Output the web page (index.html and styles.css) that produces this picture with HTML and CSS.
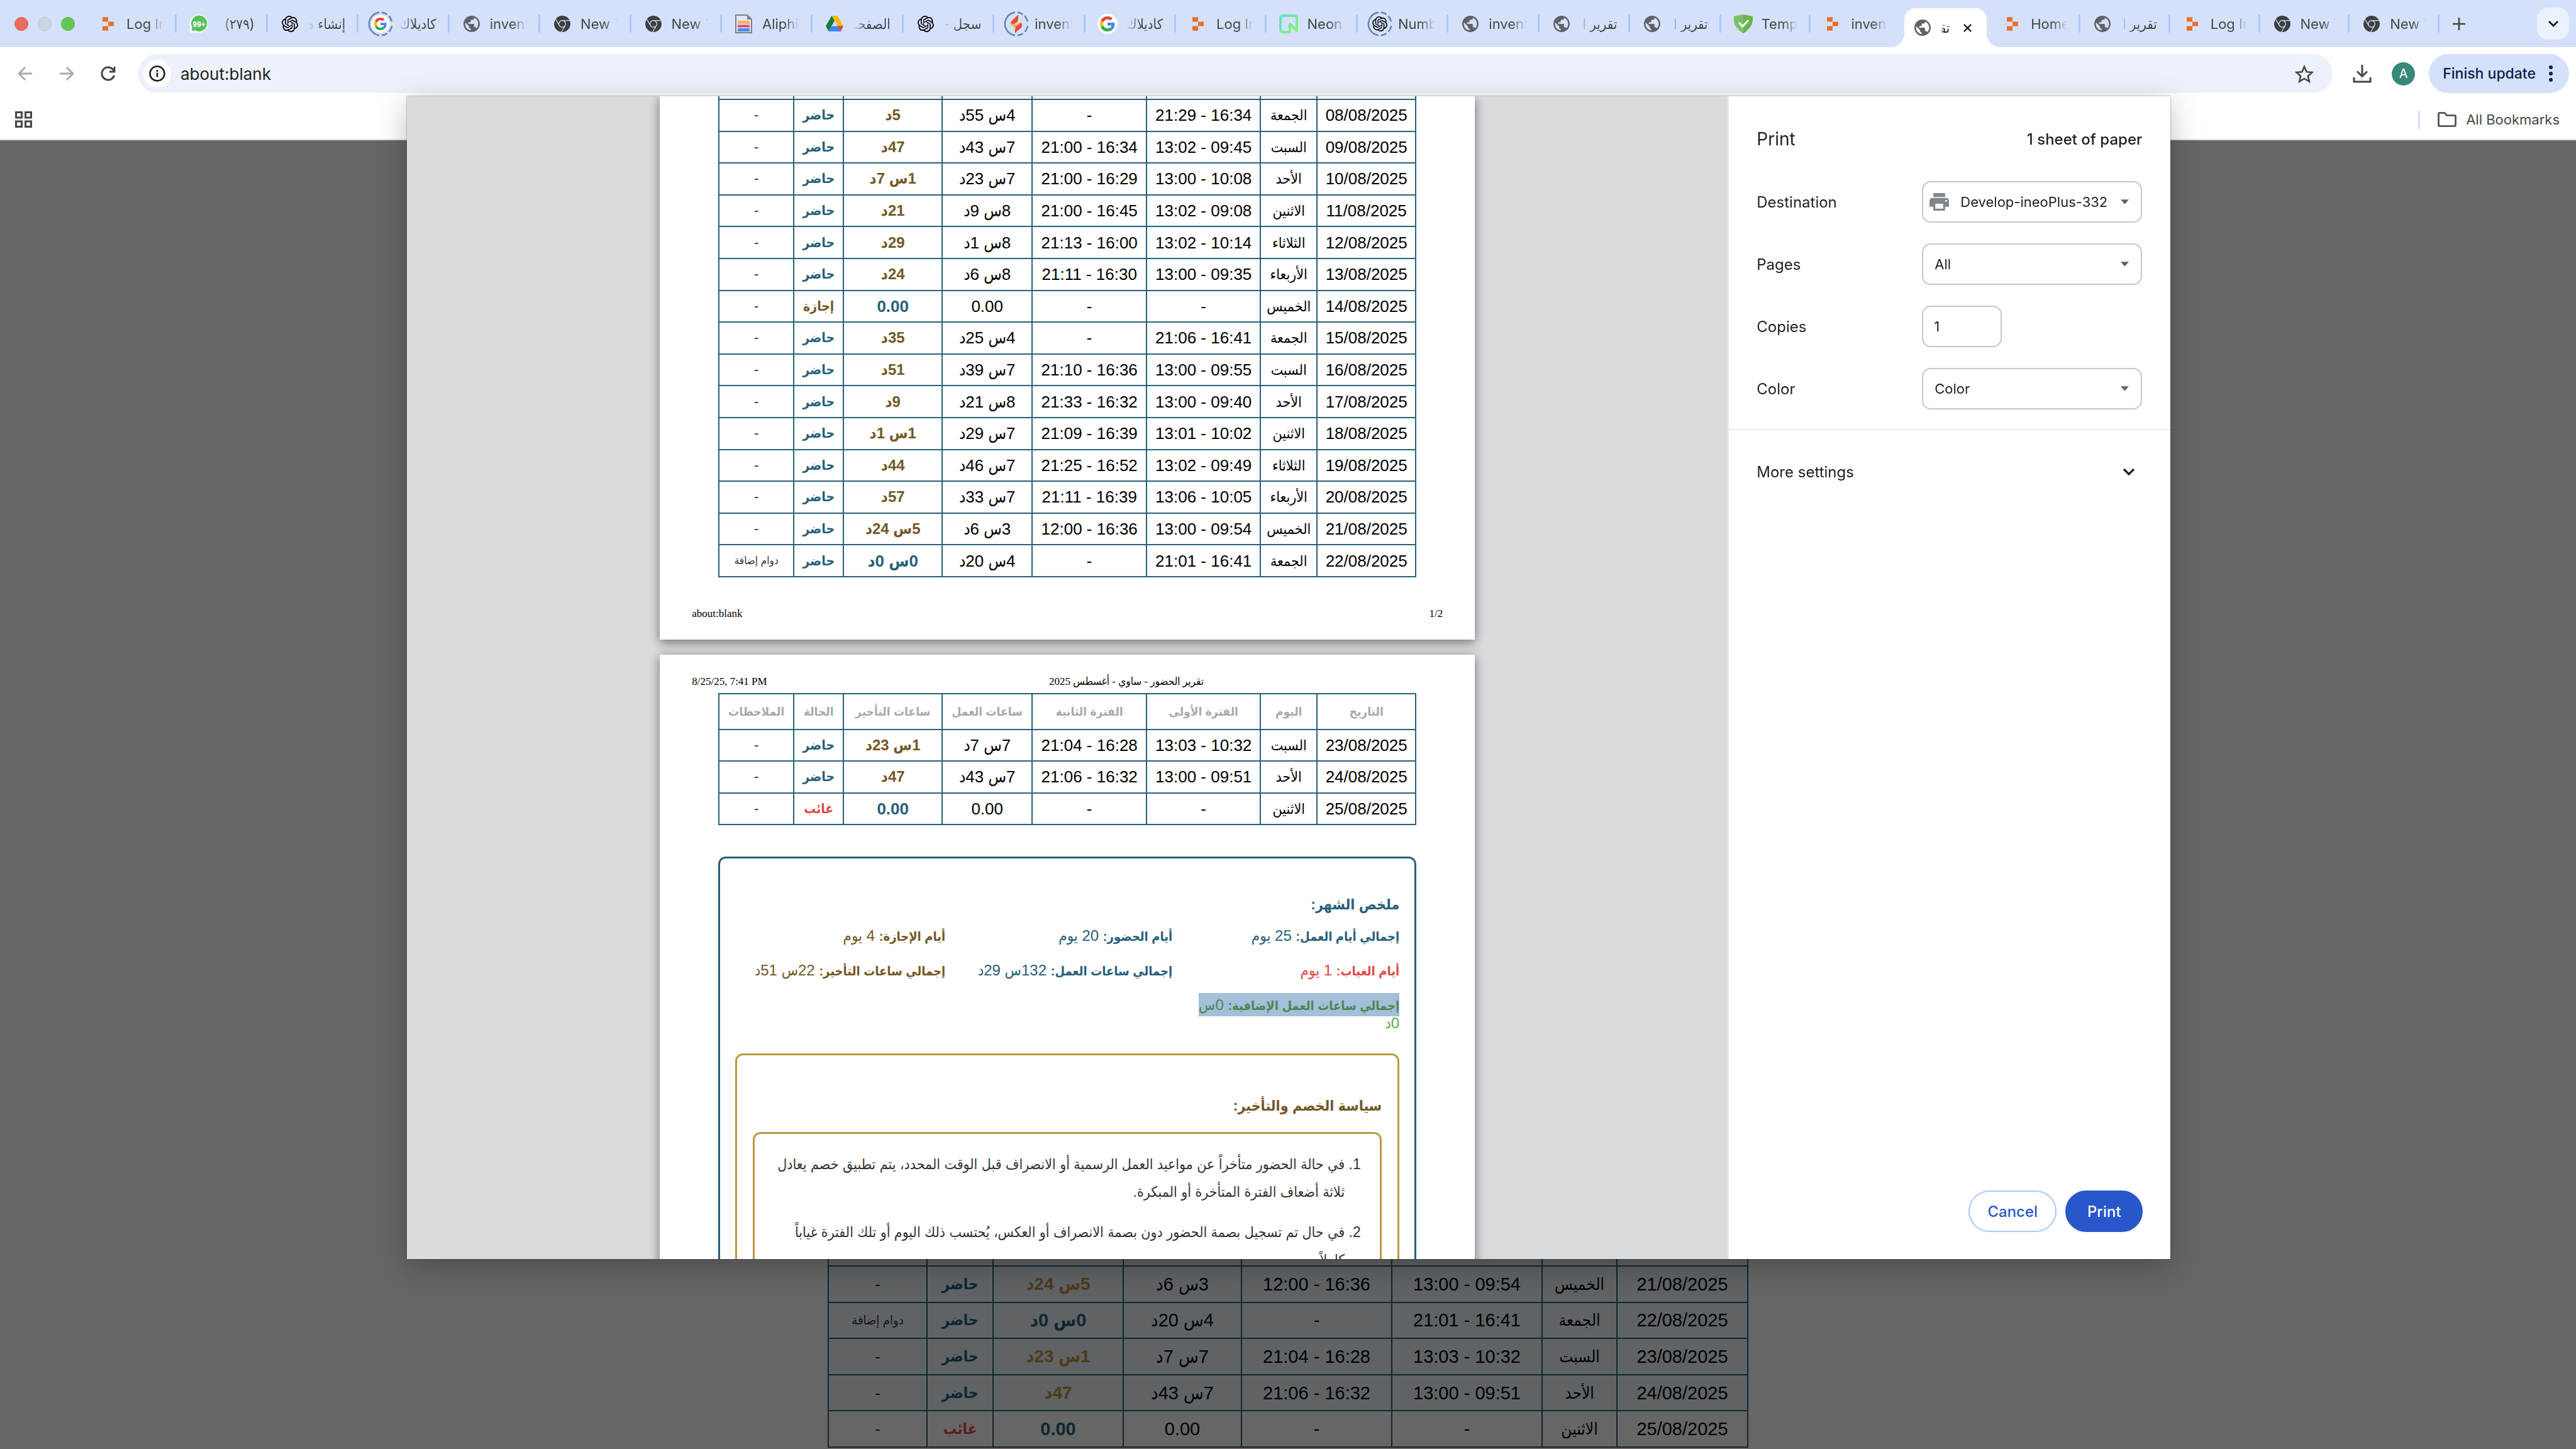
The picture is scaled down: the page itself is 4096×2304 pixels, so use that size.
FILE: index.html
```html
<!DOCTYPE html>
<html lang="en">
<head>
<meta charset="utf-8">
<title>about:blank</title>
<link rel="stylesheet" href="styles.css">
</head>
<body>
<svg class="defs" aria-hidden="true">
  <symbol id="i-rail" viewBox="0 0 20 24"><path fill="#e8702e" d="M0 0h10v8H0zM10 8h10v8H10zM0 16h10v8H0z"/></symbol>
  <symbol id="i-globe" viewBox="2 2 20 20"><path fill="#5f6368" d="M12 2C6.48 2 2 6.48 2 12s4.48 10 10 10 10-4.48 10-10S17.52 2 12 2zm-1 17.93c-3.95-.49-7-3.85-7-7.93 0-.62.08-1.21.21-1.79L9 15v1c0 1.1.9 2 2 2v1.93zm6.9-2.54c-.26-.81-1-1.39-1.9-1.39h-1v-3c0-.55-.45-1-1-1H8v-2h2c.55 0 1-.45 1-1V7h2c1.1 0 2-.9 2-2v-.41c2.93 1.19 5 4.06 5 7.41 0 2.08-.8 3.97-2.1 5.39z"/></symbol>
  <symbol id="i-chrome" viewBox="0 0 24 24"><path fill="#3c4043" d="M12 0C8.21 0 4.831 1.757 2.632 4.501l3.953 6.848A5.454 5.454 0 0 1 12 6.545h10.691A12 12 0 0 0 12 0zM1.931 5.47A11.943 11.943 0 0 0 0 12c0 6.012 4.42 10.991 10.189 11.864l3.953-6.847a5.45 5.45 0 0 1-6.865-2.29zm13.342 2.166a5.446 5.446 0 0 1 1.45 7.09l.002.001h-.002l-5.344 9.257c.206.01.413.016.621.016 6.627 0 12-5.373 12-12 0-1.54-.29-3.011-.818-4.364zM12 16.364a4.364 4.364 0 1 1 0-8.728 4.364 4.364 0 0 1 0 8.728Z"/></symbol>
  <symbol id="i-knot" viewBox="0 0 24 24"><path fill="#000" d="M22.2819 9.8211a5.9847 5.9847 0 0 0-.5157-4.9108 6.0462 6.0462 0 0 0-6.5098-2.9A6.0651 6.0651 0 0 0 4.9807 4.1818a5.9847 5.9847 0 0 0-3.9977 2.9 6.0462 6.0462 0 0 0 .7427 7.0966 5.98 5.98 0 0 0 .511 4.9107 6.051 6.051 0 0 0 6.5146 2.9001A5.9847 5.9847 0 0 0 13.2599 24a6.0557 6.0557 0 0 0 5.7718-4.2058 5.9894 5.9894 0 0 0 3.9977-2.9001 6.0557 6.0557 0 0 0-.7475-7.0729zm-9.022 12.6081a4.4755 4.4755 0 0 1-2.8764-1.0408l.1419-.0804 4.7783-2.7582a.7948.7948 0 0 0 .3927-.6813v-6.7369l2.02 1.1686a.071.071 0 0 1 .038.052v5.5826a4.504 4.504 0 0 1-4.4945 4.4944zm-9.6607-4.1254a4.4708 4.4708 0 0 1-.5346-3.0137l.142.0852 4.783 2.7582a.7712.7712 0 0 0 .7806 0l5.8428-3.3685v2.3324a.0804.0804 0 0 1-.0332.0615L9.74 19.9502a4.4992 4.4992 0 0 1-6.1408-1.6464zM2.3408 7.8956a4.485 4.485 0 0 1 2.3655-1.9728V11.6a.7664.7664 0 0 0 .3879.6765l5.8144 3.3543-2.0201 1.1685a.0757.0757 0 0 1-.071 0l-4.8303-2.7865A4.504 4.504 0 0 1 2.3408 7.872zm16.5963 3.8558L13.1038 8.364 15.1192 7.2a.0757.0757 0 0 1 .071 0l4.8303 2.7913a4.4944 4.4944 0 0 1-.6765 8.1042v-5.6772a.79.79 0 0 0-.407-.667zm2.0107-3.0231l-.142-.0852-4.7735-2.7818a.7759.7759 0 0 0-.7854 0L9.409 9.2297V6.8974a.0662.0662 0 0 1 .0284-.0615l4.8303-2.7866a4.4992 4.4992 0 0 1 6.6802 4.66zM8.3065 12.863l-2.02-1.1638a.0804.0804 0 0 1-.038-.0567V6.0742a4.4992 4.4992 0 0 1 7.3757-3.4537l-.142.0805L8.704 5.459a.7948.7948 0 0 0-.3927.6813zm1.0976-2.3654l2.602-1.4998 2.6069 1.4998v2.9994l-2.5974 1.4997-2.6067-1.4997Z"/></symbol>
  <symbol id="i-ring" viewBox="0 0 40 40"><path fill="none" stroke="#6b82b3" stroke-width="2.6" stroke-linecap="round" d="M17 1.9A18.4 18.4 0 0 0 17 38.1M23 1.9a18.4 18.4 0 0 1 6.6 2.5M34 8.1a18.4 18.4 0 0 1 3.6 7M38 24.2a18.4 18.4 0 0 1-3.8 7.5M29.6 35.6A18.4 18.4 0 0 1 23 38.1"/></symbol>
  <symbol id="i-g" viewBox="0 0 48 48"><path fill="#EA4335" d="M24 9.5c3.54 0 6.71 1.22 9.21 3.6l6.85-6.85C35.9 2.38 30.47 0 24 0 14.62 0 6.51 5.38 2.56 13.22l7.98 6.19C12.43 13.72 17.74 9.5 24 9.5z"/><path fill="#4285F4" d="M46.98 24.55c0-1.57-.15-3.09-.38-4.55H24v9.02h12.94c-.58 2.96-2.26 5.48-4.78 7.18l7.73 6c4.51-4.18 7.09-10.36 7.09-17.65z"/><path fill="#FBBC05" d="M10.53 28.59A14.5 14.5 0 0 1 9.77 24c0-1.6.27-3.14.76-4.59l-7.98-6.19A23.9 23.9 0 0 0 0 24c0 3.88.92 7.54 2.56 10.78l7.97-6.19z"/><path fill="#34A853" d="M24 48c6.48 0 11.93-2.13 15.89-5.81l-7.73-6c-2.15 1.45-4.92 2.3-8.16 2.3-6.26 0-11.57-4.22-13.47-9.91l-7.98 6.19C6.51 42.62 14.62 48 24 48z"/></symbol>
</svg>

<header class="browser">
  <div class="tabstrip">
    <div class="lights"><span class="light light--red"></span><span class="light light--idle"></span><span class="light light--green"></span></div>
    <nav class="tabs" aria-label="Tabs">
      <button class="tab"><span class="fav"><svg class="rail"><use href="#i-rail"/></svg></span><span class="tab-name">Log In</span></button>
      <button class="tab"><span class="fav"><svg width="30" height="30" viewBox="0 0 32 32"><path fill="#f4fbf3" d="M1 31V15A15.500 15.500 0 1 1 16.500 31z"/><path fill="#57c157" d="M4 28l1-6a13.500 13.500 0 1 1 5 5z"/><text x="16.500" y="21" text-anchor="middle" font-family="Liberation Sans" font-weight="700" font-size="13" fill="#fff">99+</text></svg></span><span class="tab-name tab-name--rtl" dir="rtl">(٢٧٩)</span></button>
      <button class="tab"><span class="fav"><svg class="i26"><use href="#i-knot"/></svg></span><span class="tab-name tab-name--rtl" dir="rtl">إنشاء ه</span></button>
      <button class="tab"><span class="fav"><svg width="40" height="40" viewBox="0 0 40 40"><use href="#i-ring"/><circle cx="20" cy="20" r="14" fill="#fff"/><use href="#i-g" x="10" y="10" width="20" height="20"/></svg></span><span class="tab-name tab-name--rtl" dir="rtl">كاديلاك</span></button>
      <button class="tab"><span class="fav"><svg class="i26"><use href="#i-globe"/></svg></span><span class="tab-name">invent</span></button>
      <button class="tab"><span class="fav"><svg class="i26"><use href="#i-chrome"/></svg></span><span class="tab-name">New T</span></button>
      <button class="tab"><span class="fav"><svg class="i26"><use href="#i-chrome"/></svg></span><span class="tab-name">New T</span></button>
      <button class="tab"><span class="fav"><svg width="27" height="30" viewBox="0 0 27 30"><path fill="#dfe6f5" stroke="#7b8087" stroke-width="2" d="M1 1h18l7 7v21H1z"/><path fill="#7b8087" d="M19 1v7h7z"/><path fill="#f6b45c" d="M4 10h19v5H4z"/><path fill="#e2476d" d="M4 16.500h19v4H4z"/><path fill="#4a8ee6" d="M4 22h19v5H4z"/></svg></span><span class="tab-name">Aliphi</span></button>
      <button class="tab"><span class="fav"><svg width="28" height="25" viewBox="0 0 28 25"><path fill="#fbbc04" d="M9.500 0h9L28 16.500h-9z"/><path fill="#188038" d="M9.500 0L14 8 4.600 25 0 16.500z"/><path fill="#4285f4" d="M9.300 16.500H28L23.400 25H4.600z"/><path fill="#ea4335" d="M19 16.500h9L23.400 25z"/></svg></span><span class="tab-name tab-name--rtl" dir="rtl">الصفحـ</span></button>
      <button class="tab"><span class="fav"><svg class="i26"><use href="#i-knot"/></svg></span><span class="tab-name tab-name--rtl" dir="rtl">سجل -</span></button>
      <button class="tab"><span class="fav"><svg width="40" height="40" viewBox="0 0 40 40"><use href="#i-ring"/><path fill="#e0502f" d="M23 5L12 16q-2 3 1 6l9-5q2-6 1-12z"/><path fill="#f9a73e" d="M12 19l7 2 9-4-2 7-8 2q-5-2-6-7z"/><path fill="#e5484d" d="M19 25l9-7q3 4-1 9-6 4-9 8-1-5 1-10z"/></svg></span><span class="tab-name">invent</span></button>
      <button class="tab"><span class="fav"><svg width="32" height="32" viewBox="0 0 32 32"><circle cx="16" cy="16" r="16" fill="#fff"/><use href="#i-g" x="4" y="4" width="24" height="24"/></svg></span><span class="tab-name tab-name--rtl" dir="rtl">كاديلاك</span></button>
      <button class="tab"><span class="fav"><svg class="rail"><use href="#i-rail"/></svg></span><span class="tab-name">Log In</span></button>
      <button class="tab"><span class="fav"><svg width="30" height="30" viewBox="0 0 30 30"><defs><linearGradient id="neon" x1="0" y1="0" x2="1" y2="1"><stop offset="0" stop-color="#5fdcd8"/><stop offset="1" stop-color="#8af56a"/></linearGradient></defs><path fill="none" stroke="url(#neon)" stroke-width="4" stroke-linejoin="round" d="M17 28H6q-4 0-4-4V6q0-4 4-4h18q4 0 4 4v20L17 15z"/></svg></span><span class="tab-name">Neon</span></button>
      <button class="tab"><span class="fav"><svg width="40" height="40" viewBox="0 0 40 40"><use href="#i-ring"/><use href="#i-knot" x="8" y="8" width="24" height="24"/></svg></span><span class="tab-name">Numb</span></button>
      <button class="tab"><span class="fav"><svg class="i26"><use href="#i-globe"/></svg></span><span class="tab-name">invent</span></button>
      <button class="tab"><span class="fav"><svg class="i26"><use href="#i-globe"/></svg></span><span class="tab-name tab-name--rtl" dir="rtl">تقرير ا</span></button>
      <button class="tab"><span class="fav"><svg class="i26"><use href="#i-globe"/></svg></span><span class="tab-name tab-name--rtl" dir="rtl">تقرير ا</span></button>
      <button class="tab tab--narrow"><span class="fav"><svg width="30" height="30" viewBox="0 0 30 30"><path fill="#68b34d" d="M15 0l15 3q2 17-15 27Q-2 20 0 3z"/><path fill="#7ec06a" d="M15 0L0 3q-2 17 15 27z"/><path fill="none" stroke="#fff" stroke-width="3" d="M8 13l6 6 9-10"/></svg></span><span class="tab-name">Temp</span></button>
      <button class="tab tab--narrow tab--open"><span class="fav"><svg class="rail"><use href="#i-rail"/></svg></span><span class="tab-name">inven</span></button>
      <button class="tab tab--narrow tab--open tab--active" aria-current="page"><span class="fav"><svg class="i26"><use href="#i-globe"/></svg></span><span class="tab-name tab-name--rtl" dir="rtl">تقـ</span><svg class="close" viewBox="0 0 16 16"><path fill="none" stroke="#1f1f1f" stroke-width="2.400" d="M2 2l12 12M14 2L2 14"/></svg></button>
      <button class="tab tab--narrow"><span class="fav"><svg class="rail"><use href="#i-rail"/></svg></span><span class="tab-name">Home</span></button>
      <button class="tab tab--narrow"><span class="fav"><svg class="i26"><use href="#i-globe"/></svg></span><span class="tab-name tab-name--rtl" dir="rtl">تقرير ا</span></button>
      <button class="tab tab--narrow"><span class="fav"><svg class="rail"><use href="#i-rail"/></svg></span><span class="tab-name">Log In</span></button>
      <button class="tab tab--narrow"><span class="fav"><svg class="i26"><use href="#i-chrome"/></svg></span><span class="tab-name">New T</span></button>
      <button class="tab tab--narrow"><span class="fav"><svg class="i26"><use href="#i-chrome"/></svg></span><span class="tab-name">New T</span></button>
    </nav>
    <button class="newtab" aria-label="New tab"><svg width="20" height="20" viewBox="0 0 20 20"><path stroke="#444746" stroke-width="2.600" d="M10 0v20M0 10h20"/></svg></button>
    <button class="tabsearch" aria-label="Search tabs"><svg width="18" height="12" viewBox="0 0 18 12"><path fill="none" stroke="#1f1f1f" stroke-width="3" d="M2 2l7 7 7-7"/></svg></button>
  </div>

  <div class="toolbar">
    <button class="tool tool--off" aria-label="Back"><svg width="24" height="24" viewBox="0 0 24 24"><path d="M23 12H2M12 2L2 12l10 10"/></svg></button>
    <button class="tool tool--off" aria-label="Forward"><svg width="24" height="24" viewBox="0 0 24 24"><path d="M1 12h21M12 2l10 10-10 10"/></svg></button>
    <button class="tool" aria-label="Reload"><svg width="24" height="24" viewBox="0 0 24 24"><path d="M21.500 15A10 10 0 1 1 19.500 5.500L22 8M22 1v8h-8"/></svg></button>
    <div class="omnibox">
      <span class="site"><svg width="26" height="26" viewBox="0 0 26 26"><circle cx="13" cy="13" r="11.500" fill="none" stroke="#1f1f1f" stroke-width="2.600"/><path stroke="#1f1f1f" stroke-width="2.600" d="M13 11.500v7M13 7v3"/></svg></span>
      <input class="url" type="text" value="about:blank" aria-label="Address">
      <button class="star" aria-label="Bookmark"><svg width="30" height="29" viewBox="0 0 30 29"><path fill="none" stroke="#444746" stroke-width="2.600" d="M15 3l3.600 8.200 8.900.8-6.700 5.900 2 8.700L15 22l-7.800 4.600 2-8.700L2.500 12l8.900-.8z"/></svg></button>
    </div>
    <button class="tool download" aria-label="Downloads"><svg width="30" height="30" viewBox="0 0 30 30"><path d="M15 1v18M7 11.500l8 8 8-8M2 21v7h26v-7"/></svg></button>
    <span class="avatar">A</span>
    <button class="update">Finish update<svg width="6" height="26" viewBox="0 0 6 26"><path fill="#0b1d4d" d="M3 0a3 3 0 1 1 0 6 3 3 0 0 1 0-6zm0 10a3 3 0 1 1 0 6 3 3 0 0 1 0-6zm0 10a3 3 0 1 1 0 6 3 3 0 0 1 0-6z"/></svg></button>
  </div>

  <div class="bookmarks">
    <button class="apps" aria-label="Apps"><svg width="27" height="26" viewBox="0 0 27 26"><path fill="none" stroke="#444746" stroke-width="3" d="M1.500 1.500h9v8.500h-9zM16.500 1.500h9v8.500h-9zM1.500 16h9v8.500h-9zM16.500 16h9v8.500h-9z"/></svg></button>
    <span class="bar"></span>
    <a class="all" href="#"><svg width="30" height="24" viewBox="0 0 30 24"><path fill="none" stroke="#444746" stroke-width="2.600" d="M1.500 3q0-1.500 1.500-1.500h8l3.500 4H27q1.500 0 1.500 1.500v14q0 1.500-1.500 1.500H3q-1.500 0-1.500-1.500z"/></svg>All Bookmarks</a>
  </div>
</header>

<main class="behind">
  <table class="grid grid--page" dir="rtl">
    <colgroup><col class="p1"><col class="p2"><col class="p3"><col class="p4"><col class="p5"><col class="p6"><col class="p7"><col class="p8"></colgroup>
    <tbody>
      <tr class="tint cut"><td><td><td><td><td><td><td><td></tr>
      <tr class="tint"><td>21/08/2025<td class="ar">الخميس<td>09:54 - 13:00<td>16:36 - 12:00<td>3س 6د<td class="late">5س 24د<td class="here">حاضر<td class="note">-</tr>
      <tr class="tint"><td>22/08/2025<td class="ar">الجمعة<td>16:41 - 21:01<td>-<td>4س 20د<td class="zero">0س 0د<td class="here">حاضر<td class="note note--text">دوام إضافة</tr>
      <tr class="tint"><td>23/08/2025<td class="ar">السبت<td>10:32 - 13:03<td>16:28 - 21:04<td>7س 7د<td class="late">1س 23د<td class="here">حاضر<td class="note">-</tr>
      <tr class="tint"><td>24/08/2025<td class="ar">الأحد<td>09:51 - 13:00<td>16:32 - 21:06<td>7س 43د<td class="late">47د<td class="here">حاضر<td class="note">-</tr>
      <tr><td>25/08/2025<td class="ar">الاثنين<td>-<td>-<td>0.00<td class="zero">0.00<td class="away">غائب<td class="note">-</tr>
    </tbody>
  </table>
  <div class="scrim"></div>
</main>

<div class="dialog" role="dialog" aria-label="Print">
  <div class="preview">
    <article class="sheet">
      <table class="grid grid--first" dir="rtl">
        <colgroup><col class="c1"><col class="c2"><col class="c3"><col class="c4"><col class="c5"><col class="c6"><col class="c7"><col class="c8"></colgroup>
        <tbody>
          <tr class="cut"><td><td><td><td><td><td><td><td></tr>
          <tr><td>08/08/2025<td class="ar">الجمعة<td>16:34 - 21:29<td>-<td>4س 55د<td class="late">5د<td class="here">حاضر<td class="note">-</tr>
          <tr><td>09/08/2025<td class="ar">السبت<td>09:45 - 13:02<td>16:34 - 21:00<td>7س 43د<td class="late">47د<td class="here">حاضر<td class="note">-</tr>
          <tr><td>10/08/2025<td class="ar">الأحد<td>10:08 - 13:00<td>16:29 - 21:00<td>7س 23د<td class="late">1س 7د<td class="here">حاضر<td class="note">-</tr>
          <tr><td>11/08/2025<td class="ar">الاثنين<td>09:08 - 13:02<td>16:45 - 21:00<td>8س 9د<td class="late">21د<td class="here">حاضر<td class="note">-</tr>
          <tr><td>12/08/2025<td class="ar">الثلاثاء<td>10:14 - 13:02<td>16:00 - 21:13<td>8س 1د<td class="late">29د<td class="here">حاضر<td class="note">-</tr>
          <tr><td>13/08/2025<td class="ar">الأربعاء<td>09:35 - 13:00<td>16:30 - 21:11<td>8س 6د<td class="late">24د<td class="here">حاضر<td class="note">-</tr>
          <tr><td>14/08/2025<td class="ar">الخميس<td>-<td>-<td>0.00<td class="zero">0.00<td class="leave">إجازة<td class="note">-</tr>
          <tr><td>15/08/2025<td class="ar">الجمعة<td>16:41 - 21:06<td>-<td>4س 25د<td class="late">35د<td class="here">حاضر<td class="note">-</tr>
          <tr><td>16/08/2025<td class="ar">السبت<td>09:55 - 13:00<td>16:36 - 21:10<td>7س 39د<td class="late">51د<td class="here">حاضر<td class="note">-</tr>
          <tr><td>17/08/2025<td class="ar">الأحد<td>09:40 - 13:00<td>16:32 - 21:33<td>8س 21د<td class="late">9د<td class="here">حاضر<td class="note">-</tr>
          <tr><td>18/08/2025<td class="ar">الاثنين<td>10:02 - 13:01<td>16:39 - 21:09<td>7س 29د<td class="late">1س 1د<td class="here">حاضر<td class="note">-</tr>
          <tr><td>19/08/2025<td class="ar">الثلاثاء<td>09:49 - 13:02<td>16:52 - 21:25<td>7س 46د<td class="late">44د<td class="here">حاضر<td class="note">-</tr>
          <tr><td>20/08/2025<td class="ar">الأربعاء<td>10:05 - 13:06<td>16:39 - 21:11<td>7س 33د<td class="late">57د<td class="here">حاضر<td class="note">-</tr>
          <tr><td>21/08/2025<td class="ar">الخميس<td>09:54 - 13:00<td>16:36 - 12:00<td>3س 6د<td class="late">5س 24د<td class="here">حاضر<td class="note">-</tr>
          <tr><td>22/08/2025<td class="ar">الجمعة<td>16:41 - 21:01<td>-<td>4س 20د<td class="zero">0س 0د<td class="here">حاضر<td class="note note--text">دوام إضافة</tr>
        </tbody>
      </table>
      <footer class="runner runner--foot"><span>about:blank</span><span>1/2</span></footer>
    </article>

    <article class="sheet">
      <header class="runner runner--head"><span>8/25/25, 7:41 PM</span><span class="runner-title" dir="rtl">تقرير الحضور - ساوي - أغسطس 2025</span></header>
      <table class="grid grid--second" dir="rtl">
        <colgroup><col class="c1"><col class="c2"><col class="c3"><col class="c4"><col class="c5"><col class="c6"><col class="c7"><col class="c8"></colgroup>
        <thead><tr><th>التاريخ<th>اليوم<th>الفترة الأولى<th>الفترة الثانية<th>ساعات العمل<th>ساعات التأخير<th>الحالة<th>الملاحظات</tr></thead>
        <tbody>
          <tr><td>23/08/2025<td class="ar">السبت<td>10:32 - 13:03<td>16:28 - 21:04<td>7س 7د<td class="late">1س 23د<td class="here">حاضر<td class="note">-</tr>
          <tr><td>24/08/2025<td class="ar">الأحد<td>09:51 - 13:00<td>16:32 - 21:06<td>7س 43د<td class="late">47د<td class="here">حاضر<td class="note">-</tr>
          <tr><td>25/08/2025<td class="ar">الاثنين<td>-<td>-<td>0.00<td class="zero">0.00<td class="away">غائب<td class="note">-</tr>
        </tbody>
      </table>
      <section class="summary" dir="rtl">
        <h2>ملخص الشهر:</h2>
        <div class="totals">
          <p><b>إجمالي أيام العمل:</b> 25 يوم</p>
          <p><b>أيام الحضور:</b> 20 يوم</p>
          <p class="brown"><b>أيام الإجازة:</b> 4 يوم</p>
          <p class="red"><b>أيام الغياب:</b> 1 يوم</p>
          <p><b>إجمالي ساعات العمل:</b> 132س 29د</p>
          <p class="brown"><b>إجمالي ساعات التأخير:</b> 22س 51د</p>
          <p class="green"><mark><b>إجمالي ساعات العمل الإضافية:</b> 0س</mark><br>0د</p>
        </div>
        <section class="policy">
          <h2>سياسة الخصم والتأخير:</h2>
          <ol class="rules">
            <li>في حالة الحضور متأخراً عن مواعيد العمل الرسمية أو الانصراف قبل الوقت المحدد، يتم تطبيق خصم يعادل<br>ثلاثة أضعاف الفترة المتأخرة أو المبكرة.</li>
            <li>في حال تم تسجيل بصمة الحضور دون بصمة الانصراف أو العكس، يُحتسب ذلك اليوم أو تلك الفترة غياباً<br>كاملاً.</li>
          </ol>
        </section>
      </section>
    </article>
  </div>

  <form class="panel">
    <div class="panel-head"><h1>Print</h1><span>1 sheet of paper</span></div>
    <div class="fields">
      <div class="field"><label for="dest">Destination</label>
        <span class="select"><svg class="printer" viewBox="2 3 20 18"><path fill="#80868b" d="M19 8H5c-1.660 0-3 1.340-3 3v6h4v4h12v-4h4v-6c0-1.660-1.340-3-3-3zm-3 11H8v-5h8v5zm3-7c-.550 0-1-.450-1-1s.450-1 1-1 1 .450 1 1-.450 1-1 1zm-1-9H6v4h12V3z"/></svg><select id="dest"><option>Develop-ineoPlus-332</option></select><svg class="arrow" viewBox="0 0 12 7"><path d="M0 0h12L6 7z"/></svg></span></div>
      <div class="field"><label for="pages">Pages</label>
        <span class="select"><select id="pages"><option>All</option></select><svg class="arrow" viewBox="0 0 12 7"><path d="M0 0h12L6 7z"/></svg></span></div>
      <div class="field"><label for="copies">Copies</label><input class="copies" id="copies" type="text" value="1"></div>
      <div class="field"><label for="color">Color</label>
        <span class="select"><select id="color"><option>Color</option></select><svg class="arrow" viewBox="0 0 12 7"><path d="M0 0h12L6 7z"/></svg></span></div>
    </div>
    <button class="more" type="button">More settings<svg width="20" height="13" viewBox="0 0 20 13"><path fill="none" stroke="#1f1f1f" stroke-width="3.200" d="M2 2l8 8 8-8"/></svg></button>
    <div class="actions"><button class="btn" type="button">Cancel</button><button class="btn btn--primary" type="button">Print</button></div>
  </form>
</div>
</body>
</html>
```
FILE: styles.css
```css
* { box-sizing: border-box; }

body {
  margin: 0;
  height: 100vh;
  display: flex;
  flex-direction: column;
  overflow: hidden;
  font-family: Inter, "Liberation Sans", "DejaVu Sans Condensed", sans-serif;
  font-size: 24px;
  color: #1f1f1f;
  background: #fff;
}

button, input, select { font: inherit; color: inherit; border: 0; padding: 0; background: none; }
h1, h2, p { margin: 0; }
svg { flex: none; display: block; }
.defs { position: absolute; width: 0; height: 0; }

/* Tab strip */
.browser { flex: none; border-bottom: 2px solid #dfe2e0; }
.tabstrip { display: flex; align-items: center; height: 75px; padding-right: 11px; background: #d5e1fb; }
.lights { flex: none; display: flex; gap: 15px; width: 137px; padding-left: 23px; }
.light { width: 22px; height: 22px; border-radius: 50%; border: 1px solid; }
.light--red { background: #ed6a5e; border-color: #d55b50; }
.light--idle { background: #ced5e2; border-color: #b9c0cf; }
.light--green { background: #62c655; border-color: #54ad46; }
.tabs { flex: 1; min-width: 0; display: flex; height: 75px; align-items: center; }
.tab { flex: 79 1 0; min-width: 0; height: 62px; display: flex; align-items: center; gap: 9px; padding: 0 0 0 15px; font-size: 22px; color: #444746; position: relative; }
.tab--narrow { flex-grow: 78; }
.tab::after { content: ""; flex: none; width: 3px; height: 29px; border-radius: 2px; background: #a9c7fa; margin-left: 9px; }
.tab--open::after { background: none; }
.fav { flex: none; width: 40px; height: 40px; display: flex; align-items: center; justify-content: center; }
.i26 { width: 26px; height: 26px; }
.rail { width: 18px; height: 22px; }
.tab-name { flex: 1; min-width: 0; overflow: hidden; white-space: nowrap; line-height: 36px; text-align: left; -webkit-mask-image: linear-gradient(90deg, #000 60%, transparent); mask-image: linear-gradient(90deg, #000 60%, transparent); }
.tab-name--rtl { text-align: right; -webkit-mask-image: linear-gradient(270deg, #000 60%, transparent); mask-image: linear-gradient(270deg, #000 60%, transparent); }
.tab--active { align-self: flex-end; flex: none; width: 131px; margin: 0 6px; padding-left: 9px; background: #fff; border-radius: 18px 18px 0 0; color: #1f1f1f; }
.tab--active .tab-name { flex: 0 0 14px; }
.tab--active .close { margin-left: 12px; width: 15px; height: 15px; }
.tab--active::before, .tab--active::after { content: ""; position: absolute; bottom: 0; margin: 0; width: 22px; height: 22px; border-radius: 0; }
.tab--active::before { left: -22px; background: radial-gradient(circle at 0 0, transparent 22px, #fff 22px); }
.tab--active::after { right: -22px; background: radial-gradient(circle at 100% 0, transparent 22px, #fff 22px); }
.newtab { flex: none; width: 62px; height: 51px; display: flex; align-items: center; justify-content: center; }
.tabsearch { flex: none; width: 51px; height: 51px; margin-left: 93px; border-radius: 18px; background: #ebf2fd; display: flex; align-items: center; justify-content: center; }

/* Toolbar */
.toolbar { display: flex; align-items: center; height: 84px; padding: 0 11px 0 7px; }
.tool { width: 66px; height: 62px; display: flex; align-items: center; justify-content: center; }
.tool path { fill: none; stroke: #444746; stroke-width: 3; }
.tool--off path { stroke: #aaabac; }
.omnibox { flex: 1; height: 62px; margin-left: 14px; padding: 0 30px 0 9px; border-radius: 31px; background: #edf2fa; display: flex; align-items: center; }
.site { width: 44px; height: 44px; border-radius: 50%; background: #fff; display: flex; align-items: center; justify-content: center; }
.url { flex: 1; margin-left: 15px; font-size: 26px; outline: 0; }
.star { display: flex; }
.download { width: 94px; }
.avatar { width: 37px; height: 37px; border-radius: 50%; background: #38877a; color: #fff; font-size: 20px; line-height: 37px; text-align: center; }
.update { height: 62px; margin-left: 22px; padding: 0 26px 0 22px; border-radius: 31px; background: #d5e1fb; color: #0b1d4d; font-size: 23px; font-weight: 500; display: flex; align-items: center; gap: 21px; }

/* Bookmarks bar */
.bookmarks { display: flex; align-items: center; height: 62px; padding: 0 26px 0 24px; color: #444746; }
.bar { width: 3px; height: 29px; margin-left: auto; background: #d5e1fb; }
.all { display: flex; align-items: center; gap: 15px; margin-left: 28px; color: inherit; text-decoration: none; font-size: 22px; }

/* Report page under the dialog */
.behind { flex: 1; min-height: 0; display: flex; flex-direction: column; justify-content: flex-end; align-items: center; overflow: hidden; padding-bottom: 2px; position: relative; }
.scrim { position: absolute; inset: 0; background: rgba(0, 0, 0, .6); }

.grid { border-collapse: collapse; table-layout: fixed; font-family: "Liberation Sans", "DejaVu Sans Condensed", sans-serif; font-size: 26px; line-height: 30px; color: #000; }
.grid td, .grid th { border: 2px solid #28607a; padding: 0; text-align: center; vertical-align: middle; white-space: nowrap; }
.grid th { color: #a9a9a9; height: 57px; font-size: 19px; }
.grid .ar { font-size: 23px; }
.grid .late { color: #735825; font-size: 24px; font-weight: 700; }
.grid .zero { color: #28607a; font-weight: 700; }
.grid .here { color: #28607a; font-weight: 700; font-size: 21px; }
.grid .leave { color: #735825; font-weight: 700; font-size: 21px; }
.grid .away { color: #e04a45; font-weight: 700; font-size: 21px; }
.grid .note { color: #333; font-size: 22px; }
.grid .note--text { font-size: 17px; }
.grid--page { flex: none; width: 1464px; height: 314px; font-size: 29px; }
.grid--page .cut td { height: 24px; }
.grid--page .ar { font-size: 26px; }
.grid--page .here, .grid--page .away { font-size: 24px; }
.grid--page .note { font-size: 26px; }
.grid--page .note--text { font-size: 20px; }
.grid--page .late { color: #c5923a; font-size: 28px; }
.grid--page .tint { background: #eef8ff; }
.p1 { width: 208px; } .p2 { width: 119px; } .p3 { width: 239px; } .p4 { width: 239px; }
.p5 { width: 188px; } .p6 { width: 207px; } .p7 { width: 105px; } .p8 { width: 157px; }
.c1 { width: 157px; } .c2 { width: 90px; } .c3 { width: 181px; } .c4 { width: 182px; }
.c5 { width: 143px; } .c6 { width: 157px; } .c7 { width: 79px; } .c8 { width: 119px; }

/* Print dialog */
.dialog { position: fixed; top: 153px; left: 15.8vw; width: 68.46vw; height: 1849px; display: flex; background: #fff; box-shadow: 0 0 2px rgba(0, 0, 0, .5), 0 12px 44px rgba(0, 0, 0, .25); }
.preview { flex: 1; min-width: 0; overflow: hidden; display: flex; flex-direction: column; align-items: center; gap: 24px; background: #dadbdf; }
.sheet { flex: none; width: 1296px; padding: 0 93px; background: #fff; box-shadow: 0 4px 16px rgba(0, 0, 0, .5); }
.grid--first { width: 1110px; height: 765px; }
.grid--first .cut td { height: 5px; border-top: 0; }
.grid--second { width: 1110px; height: 210px; }
.runner { display: flex; margin: 0 -42px; font-family: "Liberation Serif", "DejaVu Sans Condensed", serif; font-size: 17px; line-height: 24px; color: #000; }
.runner--foot { justify-content: space-between; padding: 46px 0 29px; }
.runner--head { padding: 31px 0 6px; gap: 68px; }
.runner-title { flex: 1; text-align: center; }

.summary { margin-top: 50px; height: 700px; padding: 49px 24px; border: 3px solid #28607a; border-radius: 12px; font-family: "Liberation Sans", "DejaVu Sans Condensed", sans-serif; color: #28607a; }
.summary h2 { font-size: 23px; line-height: 48px; }
.totals { display: grid; grid-template-columns: repeat(3, 1fr); column-gap: 27px; row-gap: 26px; margin-top: 12px; font-size: 24px; line-height: 28px; }
.totals p { white-space: nowrap; }
.totals b { font-size: 20px; }
.brown { color: #735825; }
.red { color: #e04a45; }
.green { color: #5aaa50; }
.totals mark { padding: 5px 0; background: #a3bfd9; color: #4c8752; }
.policy { margin-top: 34px; height: 600px; padding: 56px 25px; border: 3px solid #bd9845; border-radius: 12px; color: #735825; }
.rules { margin: 18px 0 0; height: 400px; padding: 26px 56px 0 24px; border: 3px solid #bd9845; border-radius: 12px; font-size: 23px; line-height: 44px; color: #333; }
.rules li { margin-bottom: 20px; white-space: nowrap; }

/* Settings panel */
.panel { width: 704px; display: flex; flex-direction: column; border-left: 2px solid #e8eaed; padding: 45px 0 43px; }
.panel-head { display: flex; align-items: center; justify-content: space-between; height: 46px; padding: 0 45px 0 44px; font-weight: 500; }
.panel-head h1 { font-size: 28px; font-weight: 400; }
.panel-head span { font-size: 24px; }
.fields { display: grid; gap: 33px; padding: 44px 45px 31px 44px; border-bottom: 2px solid #e8eaed; }
.field { display: grid; grid-template-columns: 1fr 350px; align-items: center; height: 66px; }
.select { height: 66px; display: flex; align-items: center; border: 2px solid #c7c7c7; border-radius: 14px; padding: 0 19px 0 18px; }
.select select { flex: 1; min-width: 0; height: 62px; appearance: none; outline: 0; font-size: 22px; }
.printer { width: 31px; height: 30px; margin: 0 18px 0 -8px; }
.arrow { width: 13px; height: 8px; fill: #5f6368; }
.copies { width: 127px; height: 66px; border: 2px solid #c7c7c7; border-radius: 14px; padding: 0 17px; font-size: 22px; outline: 0; }
.more { display: flex; align-items: center; justify-content: space-between; height: 132px; padding: 0 56px 0 44px; }
.actions { display: flex; justify-content: flex-end; gap: 14px; margin-top: auto; padding-right: 44px; }
.btn { width: 140px; height: 66px; border-radius: 33px; border: 2px solid #a9c7fa; color: #2757cb; font-weight: 500; }
.btn--primary { width: 123px; border-color: #2757cb; background: #2757cb; color: #fff; }
```
